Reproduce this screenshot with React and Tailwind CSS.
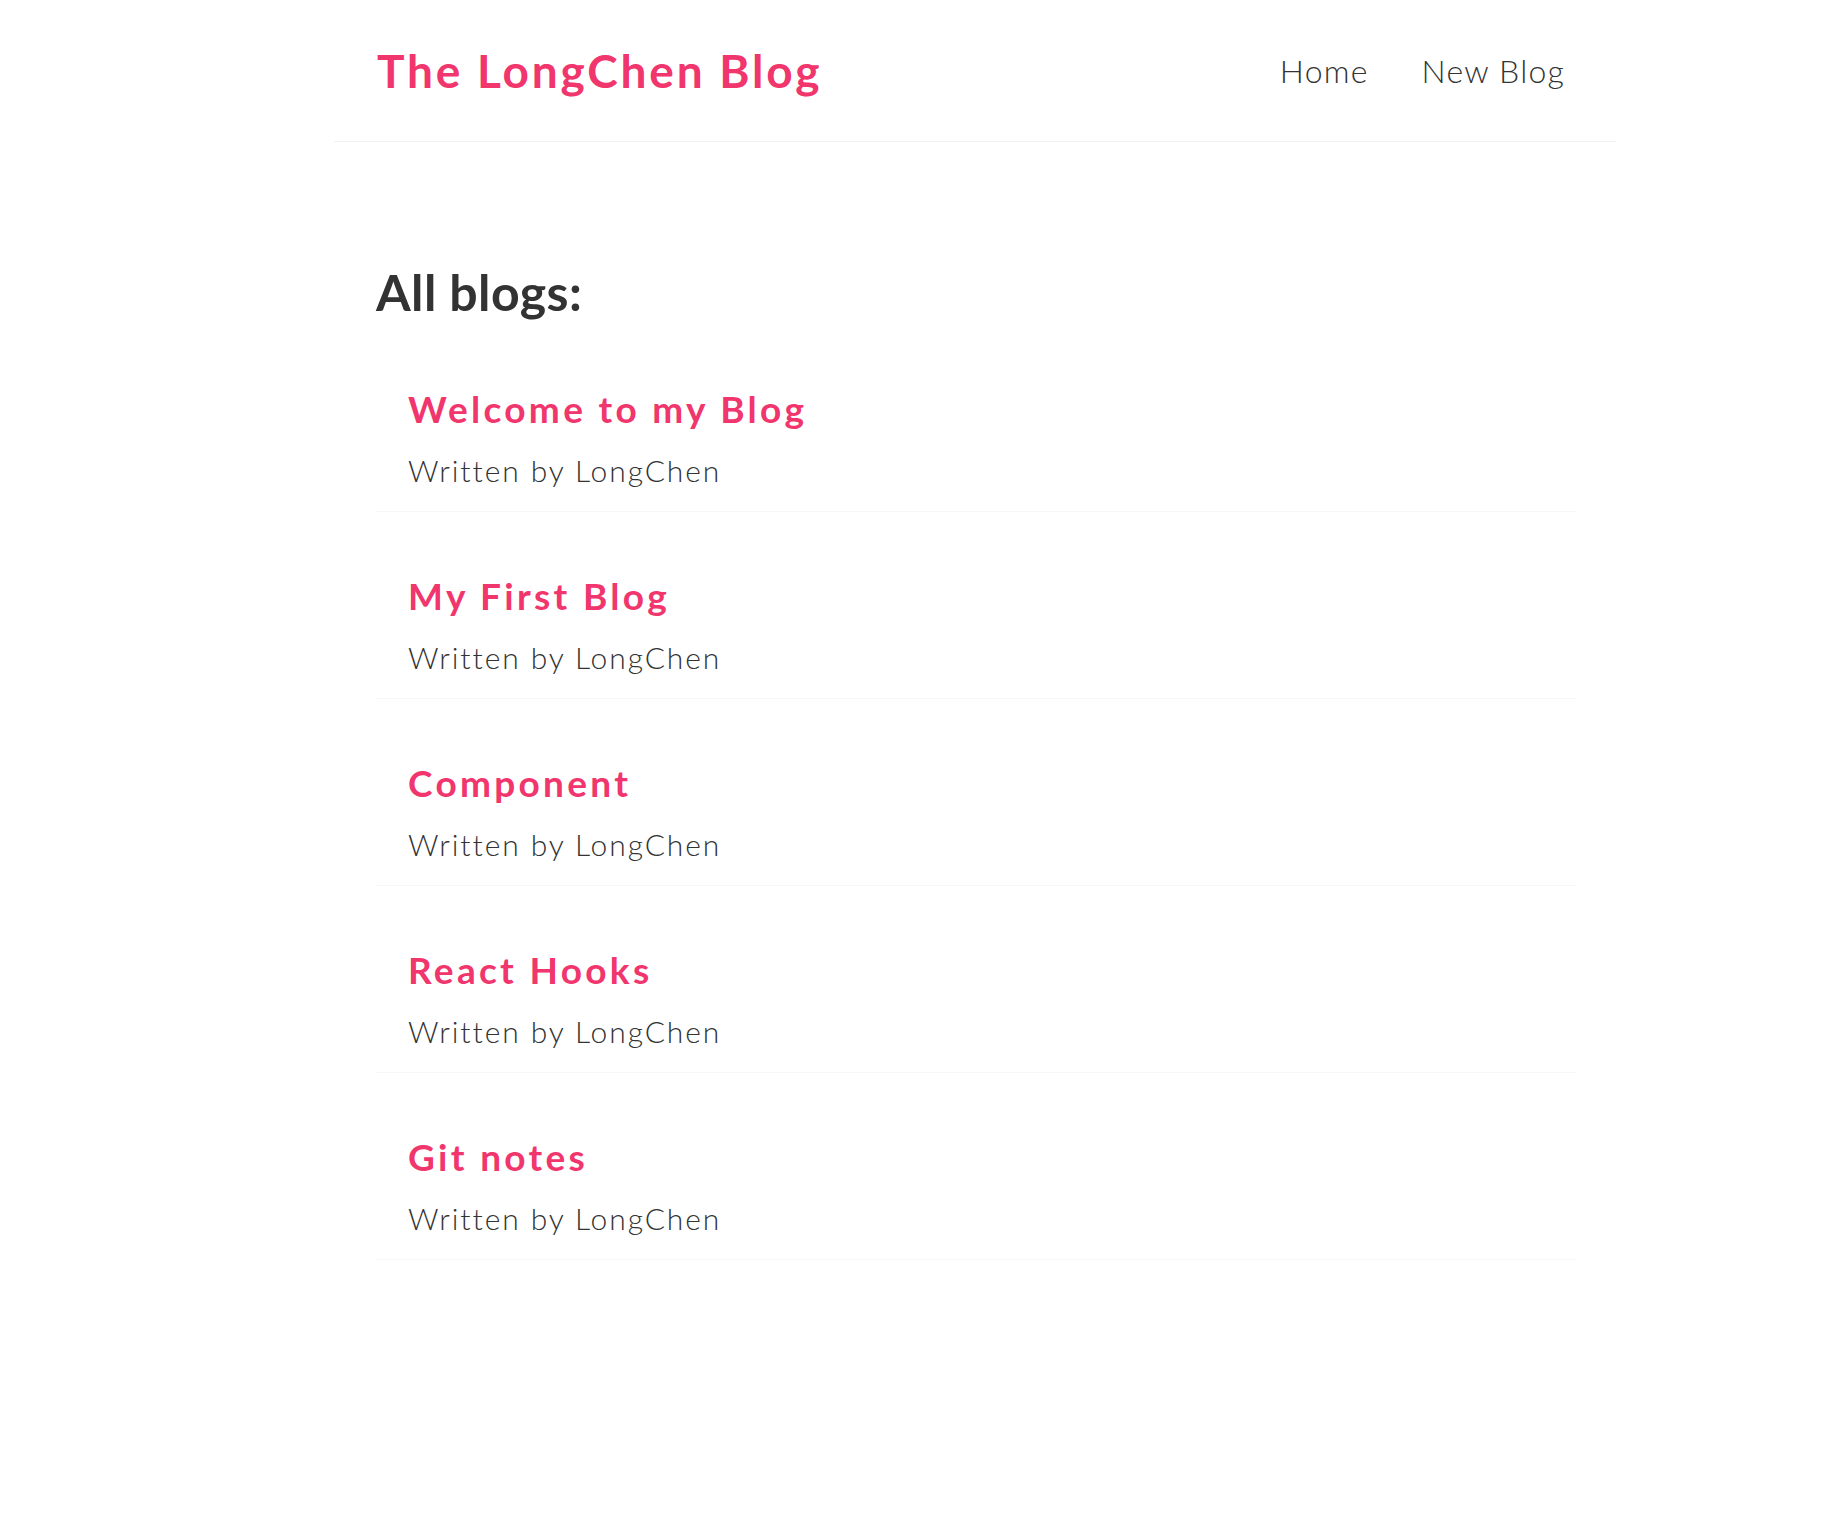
const blogs = [
  { id: 1, title: 'Welcome to my Blog', author: 'LongChen' },
  { id: 2, title: 'My First Blog', author: 'LongChen' },
  { id: 3, title: 'Component', author: 'LongChen' },
  { id: 4, title: 'React Hooks', author: 'LongChen' },
  { id: 5, title: 'Git notes', author: 'LongChen' },
];

function Navbar() {
  return (
    <nav className="ml-[334px] w-[1282px] h-[142px] flex items-center pl-[43px] pr-[51px] border-b border-[#f2f2f2]">
      <h1 className="text-[46px] leading-[60px] font-bold text-[#f1356d] tracking-[2.8px]">The LongChen Blog</h1>
      <div className="ml-auto flex items-center gap-[53px] text-[32px] leading-[40px] font-light text-[#333] tracking-[1.2px]">
        <a href="/">Home</a>
        <a href="/create">New Blog</a>
      </div>
    </nav>
  );
}

function BlogPreview({ blog }) {
  return (
    <div className="pl-[32px] pb-[21px] border-b border-[#f7f7f7]">
      <h2 className="text-[37px] leading-[48px] font-bold text-[#f1356d] mb-[17px] tracking-[3.3px]">{blog.title}</h2>
      <p className="text-[30px] leading-[40px] font-light text-[#333] tracking-[1.9px]">Written by {blog.author}</p>
    </div>
  );
}

export default function App() {
  return (
    <div className="min-h-screen bg-white font-['Lato',sans-serif]">
      <Navbar />
      <main className="ml-[376px] w-[1200px] pt-[120px]">
        <h2 className="text-[50px] leading-[60px] font-bold text-[#333] mb-[63px] tracking-[0.4px]">All blogs:</h2>
        <div className="flex flex-col gap-[60px]">
          {blogs.map(blog => (
            <BlogPreview key={blog.id} blog={blog} />
          ))}
        </div>
      </main>
    </div>
  );
}
